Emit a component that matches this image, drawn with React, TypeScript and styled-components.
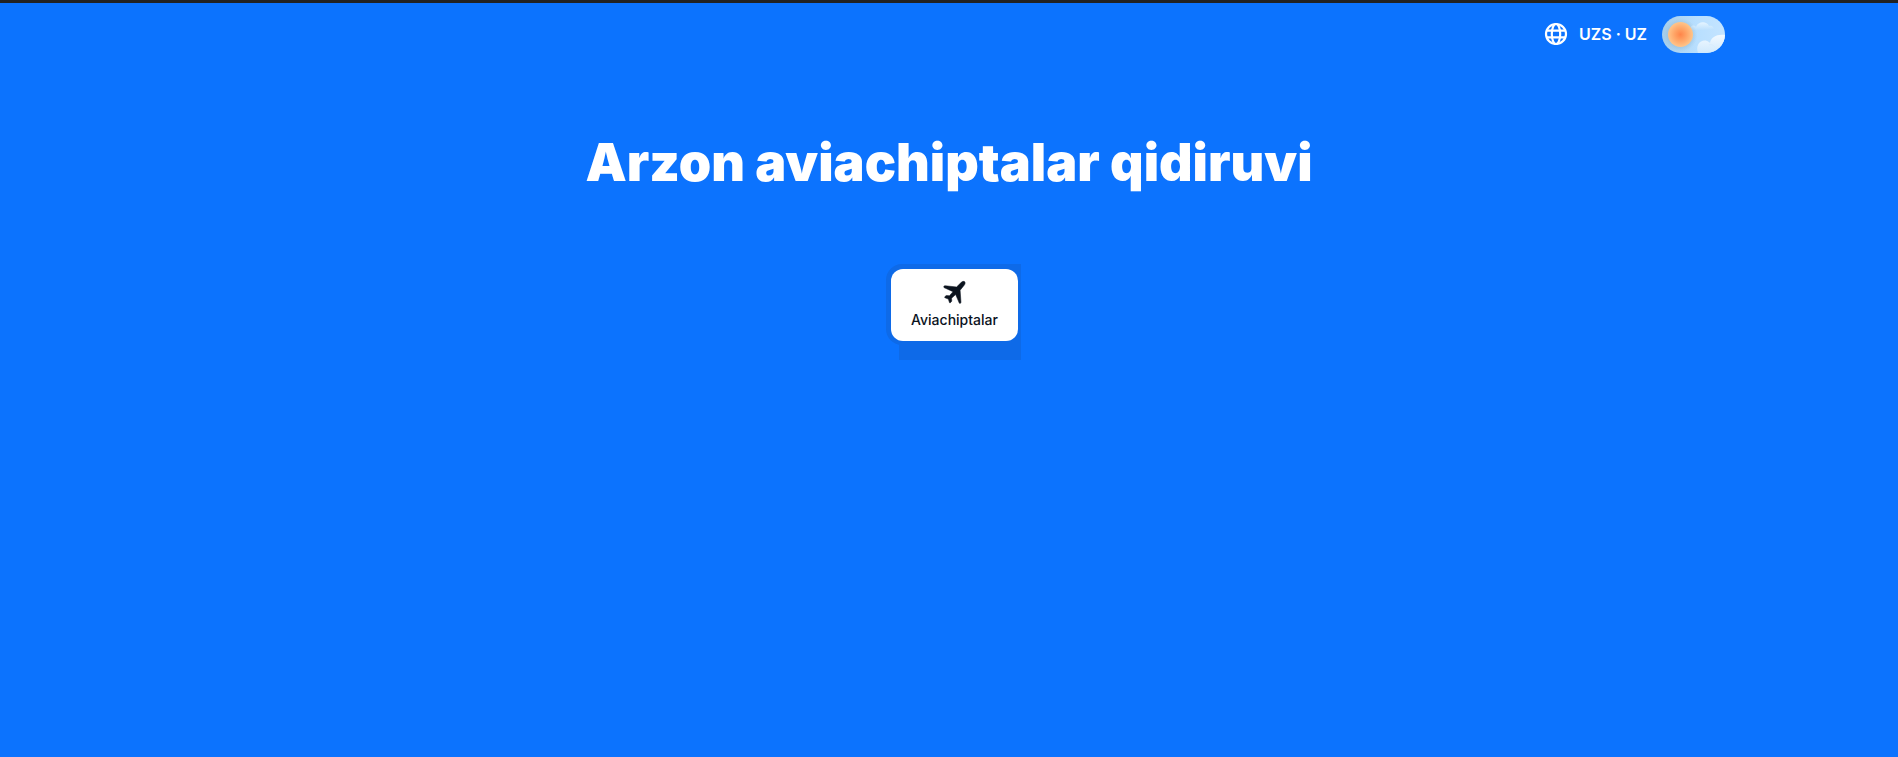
import React, { useState } from "react";
import styled, { createGlobalStyle } from "styled-components";

const GlobalStyle = createGlobalStyle`
  *, *::before, *::after { box-sizing: border-box; }
  body {
    margin: 0;
    background: #0c73fe;
    font-family: Inter, "Liberation Sans", sans-serif;
  }
`;

const Page = styled.div`
  min-height: 100vh;
  border-top: 3px solid #222222;
  background: #0c73fe;
  color: #ffffff;
`;

const Header = styled.header`
  display: flex;
  align-items: center;
  justify-content: flex-end;
  gap: 15px;
  width: 100%;
  max-width: 1600px;
  margin: 0 auto;
  padding: 13px 24px;
`;

const LocaleButton = styled.button`
  display: flex;
  align-items: center;
  gap: 11px;
  padding: 0 0 2px;
  border: 0;
  background: none;
  color: inherit;
  font: 600 16px/24px Inter, "Liberation Sans", sans-serif;
  cursor: pointer;
`;

const ThemeLabel = styled.label`
  position: relative;
  display: block;
  width: 63px;
  height: 37px;
  border-radius: 19px;
  overflow: hidden;
  cursor: pointer;
`;

const ThemeInput = styled.input`
  position: absolute;
  inset: 0;
  width: 100%;
  height: 100%;
  margin: 0;
  opacity: 0;
  cursor: pointer;
`;

const Main = styled.main`
  display: flex;
  flex-direction: column;
  align-items: center;
  padding: 65px 24px;
`;

const Title = styled.h1`
  margin: 0;
  font-size: 52px;
  font-weight: 900;
  line-height: 64px;
  text-align: center;
`;

const Tabs = styled.nav`
  position: relative;
  isolation: isolate;
  margin: 69px 0 0 9px;
  padding: 5px 3px 19px 5px;

  &::before,
  &::after {
    content: "";
    position: absolute;
    z-index: -1;
    background: #0e6ae8;
  }

  &::before {
    inset: 0 0 15px;
    border-radius: 16px 0 0 16px;
  }

  &::after {
    inset: 16px 0 0 13px;
  }
`;

const Tab = styled.a`
  display: flex;
  flex-direction: column;
  align-items: center;
  gap: 6px;
  min-width: 127px;
  height: 72px;
  padding: 11px 20px;
  border-radius: 12px;
  background: #ffffff;
  color: #0b131e;
  font-size: 14px;
  font-weight: 500;
  line-height: 20px;
  text-decoration: none;
`;

function GlobeIcon() {
  return (
    <svg width="24" height="24" viewBox="0 0 24 24" fill="none" stroke="currentColor" strokeWidth="2.2" aria-hidden="true">
      <circle cx="12" cy="12" r="10" />
      <ellipse cx="12" cy="12" rx="4.2" ry="10" />
      <path d="M2.8 8.6h18.4M2.8 15.4h18.4" />
    </svg>
  );
}

function PlaneIcon() {
  return (
    <svg width="24" height="24" viewBox="1 0.5 23 23" fill="currentColor" aria-hidden="true">
      <path d="M21.7 2.1c.8.8.6 2.2-.4 3.4l-3.900 4.800.8 11.200c0 .6-.1 1-.5 1.300-.5.3-1 .1-1.200-.4l-3.400-8-3.900 3.500.2 2.400c0 .4-.1.700-.4 1l-1 1c-.3.3-.7.2-.8-.2l-1.100-3.300-3.200-1.300c-.4-.2-.5-.6-.2-.9l.9-.8c.3-.3.6-.4 1-.4l2.600.2 3.400-3.900-8.300-3.800c-.6-.3-.8-.9-.4-1.400.3-.4.7-.6 1.300-.5l10.800 1.200 4.300-4.200c1.200-1.200 2.800-1.500 3.400-.9z" stroke="currentColor" strokeWidth="0.5" />
    </svg>
  );
}

function SkyArt() {
  return (
    <svg width="63" height="37" viewBox="0 0 63 37" aria-hidden="true">
      <defs>
        <linearGradient id="sky" x1="0" x2="1">
          <stop offset="0" stopColor="#a5cdea" />
          <stop offset="0.55" stopColor="#b8dfff" />
          <stop offset="1" stopColor="#c4e4ff" />
        </linearGradient>
        <linearGradient id="cloud" x1="0" y1="0" x2="0" y2="1">
          <stop offset="0" stopColor="#f2f9ff" />
          <stop offset="1" stopColor="#d0e9fd" />
        </linearGradient>
        <linearGradient id="smallCloud" x1="0" y1="0" x2="0" y2="1">
          <stop offset="0" stopColor="#e5f4ff" />
          <stop offset="1" stopColor="#bce0fd" />
        </linearGradient>
        <radialGradient id="sun">
          <stop offset="0" stopColor="#ff8549" />
          <stop offset="0.5" stopColor="#ffa567" />
          <stop offset="1" stopColor="#ffc58a" />
        </radialGradient>
        <radialGradient id="halo">
          <stop offset="0.7" stopColor="#7ca4bd" stopOpacity="0.3" />
          <stop offset="1" stopColor="#8fb7d2" stopOpacity="0" />
        </radialGradient>
      </defs>
      <rect width="63" height="37" fill="url(#sky)" />
      <path d="M28 14c0-4 3-6 6-3 2-6 11-6 13-1 3-1 5 1 5 4z" fill="url(#smallCloud)" />
      <path d="M36 37c-3-8 3-14 9-12 1 0 2 1 3 2 1-6 7-9 15-8v18z" fill="url(#cloud)" />
      <path d="M47 29c2-1 5 0 6 3" fill="none" stroke="#d8edfd" />
      <circle cx="18.5" cy="19" r="17" fill="url(#halo)" />
      <circle cx="18.5" cy="18.5" r="12.5" fill="url(#sun)" />
    </svg>
  );
}

export default function App() {
  const [light, setLight] = useState(true);
  return (
    <>
      <GlobalStyle />
      <Page>
        <Header>
          <LocaleButton type="button">
            <GlobeIcon />
            <span>UZS · UZ</span>
          </LocaleButton>
          <ThemeLabel>
            <SkyArt />
            <ThemeInput
              type="checkbox"
              aria-label="Kunduzgi mavzu"
              checked={light}
              onChange={(event) => setLight(event.target.checked)}
            />
          </ThemeLabel>
        </Header>
        <Main>
          <Title>Arzon aviachiptalar qidiruvi</Title>
          <Tabs>
            <Tab href="#aviachiptalar" aria-current="page">
              <PlaneIcon />
              <span>Aviachiptalar</span>
            </Tab>
          </Tabs>
        </Main>
      </Page>
    </>
  );
}
